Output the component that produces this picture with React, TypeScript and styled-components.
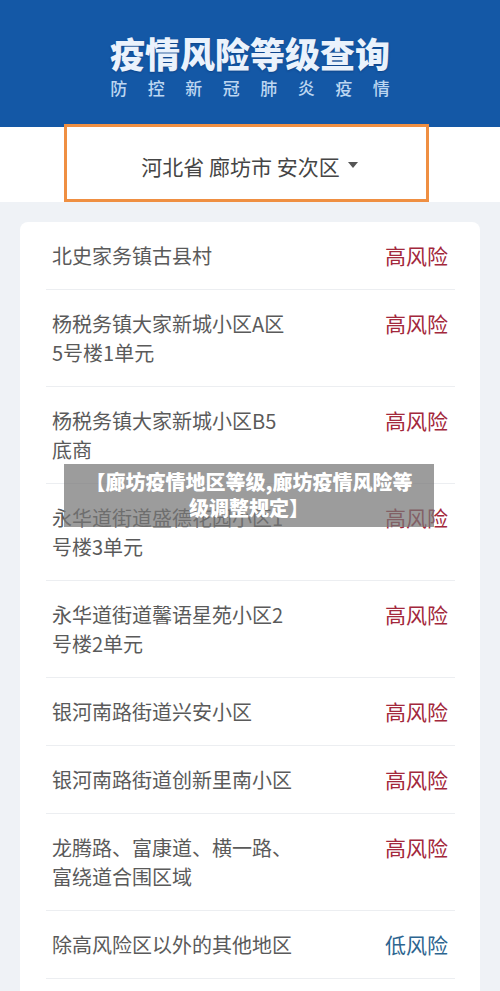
import React from "react";
import styled, { createGlobalStyle } from "styled-components";

const Global = createGlobalStyle`
  html, body { margin: 0; padding: 0; }
  body {
    background: #eff2f6;
    font-family: "Noto Sans CJK SC", "Noto Sans", sans-serif;
  }
`;

const Page = styled.div`
  position: relative;
  width: 500px;
  height: 991px;
  overflow: hidden;
  background: #eff2f6;
`;

const Header = styled.header`
  height: 127px;
  background: #1458a6;
  box-sizing: border-box;
  padding-top: 33px;
  display: flex;
  flex-direction: column;
  align-items: center;
`;

const Title = styled.h1`
  margin: 0;
  font-size: 35px;
  line-height: 40px;
  font-weight: 900;
  color: #eaf2fc;
  text-shadow: 0 1px 2px rgba(0, 30, 80, 0.35);
`;

const Subtitle = styled.div`
  margin-top: 3px;
  font-size: 17px;
  line-height: 24px;
  font-weight: 500;
  color: #bcd6f1;
  letter-spacing: 20.5px;
  margin-right: -20.5px;
`;

const SelectorBand = styled.div`
  display: flow-root;
  height: 75px;
  background: #ffffff;
`;

const SelectorBox = styled.div`
  box-sizing: border-box;
  margin-left: 64px;
  margin-top: -3px;
  width: 365px;
  height: 78px;
  border: 3px solid #ef8f42;
  background: #ffffff;
  display: flex;
  align-items: center;
  justify-content: center;
  padding-top: 6px;
  padding-left: 6px;
  gap: 8px;
  font-size: 21px;
  color: #454545;
`;

const Caret = styled.svg`
  width: 10px;
  height: 6px;
  margin-top: -3px;
`;

const Main = styled.main`
  padding: 20px 20px 0 20px;
`;

const Card = styled.section`
  background: #ffffff;
  border-radius: 8px;
  padding: 0 25px 20px 26px;
`;

const Row = styled.div`
  display: flex;
  justify-content: space-between;
  align-items: flex-start;
  padding: 19px 7px 19px 6px;
  border-bottom: 1px solid #eceef1;
`;

const Place = styled.div`
  width: 242px;
  font-size: 20px;
  line-height: 29px;
  color: #5a5a5a;
`;

const Risk = styled.div<{ $level: "high" | "low" }>`
  font-size: 21px;
  line-height: 29px;
  color: ${(p) => (p.$level === "high" ? "#a3283c" : "#2d6590")};
`;

const Banner = styled.div`
  position: absolute;
  left: 64px;
  top: 464px;
  width: 370px;
  height: 63px;
  background: rgba(118, 118, 118, 0.72);
  color: #ffffff;
  font-weight: 900;
  font-size: 20px;
  line-height: 26px;
  text-align: center;
  box-sizing: border-box;
  padding: 5px 14px 0;
`;

const rows: { name: string; level: "high" | "low" }[] = [
  { name: "北史家务镇古县村", level: "high" },
  { name: "杨税务镇大家新城小区A区5号楼1单元", level: "high" },
  { name: "杨税务镇大家新城小区B5底商", level: "high" },
  { name: "永华道街道盛德花园小区1号楼3单元", level: "high" },
  { name: "永华道街道馨语星苑小区2号楼2单元", level: "high" },
  { name: "银河南路街道兴安小区", level: "high" },
  { name: "银河南路街道创新里南小区", level: "high" },
  { name: "龙腾路、富康道、横一路、富绕道合围区域", level: "high" },
  { name: "除高风险区以外的其他地区", level: "low" },
];

export default function App() {
  return (
    <Page>
      <Global />
      <Header>
        <Title>疫情风险等级查询</Title>
        <Subtitle>防控新冠肺炎疫情</Subtitle>
      </Header>
      <SelectorBand>
        <SelectorBox>
          <span>河北省 廊坊市 安次区</span>
          <Caret viewBox="0 0 10 6">
            <path d="M0 0 L10 0 L5 6 Z" fill="#555" />
          </Caret>
        </SelectorBox>
      </SelectorBand>
      <Main>
        <Card>
          {rows.map((r) => (
            <Row key={r.name}>
              <Place>{r.name}</Place>
              <Risk $level={r.level}>{r.level === "high" ? "高风险" : "低风险"}</Risk>
            </Row>
          ))}
        </Card>
      </Main>
      <Banner>【廊坊疫情地区等级,廊坊疫情风险等级调整规定】</Banner>
    </Page>
  );
}
